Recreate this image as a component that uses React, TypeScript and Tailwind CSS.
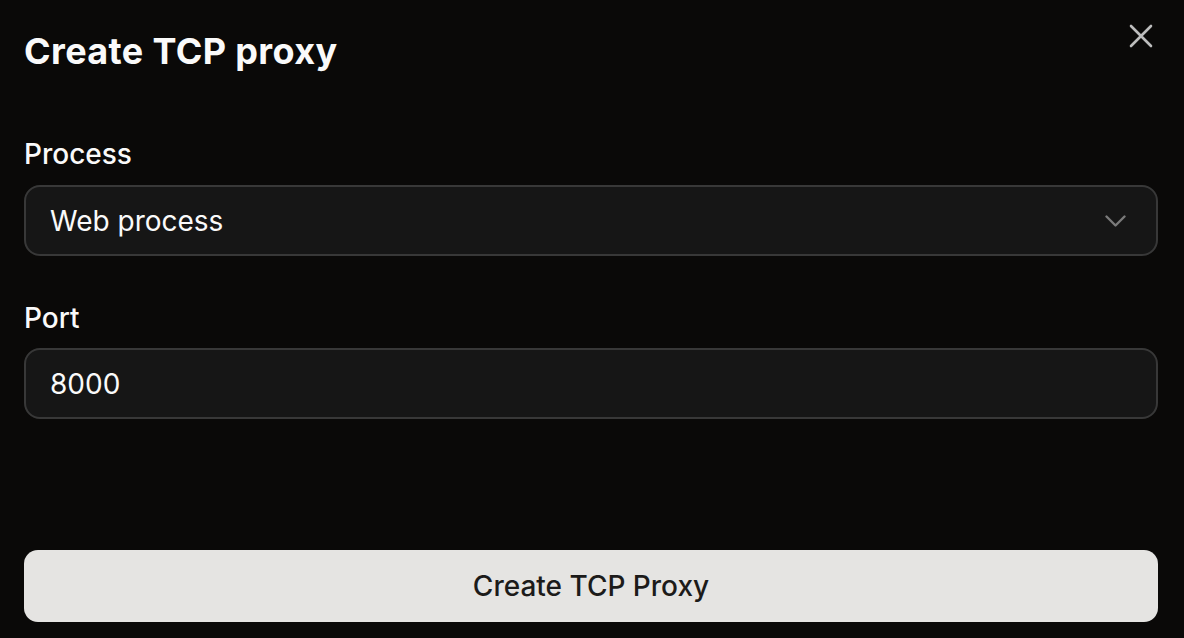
const font = { fontFamily: "Inter, 'Noto Sans', sans-serif" };

function CloseIcon() {
  return (
    <svg width="24" height="24" viewBox="0 0 24 24" fill="none">
      <path d="M2 2 L22 22 M22 2 L2 22" stroke="#bdbdbd" strokeWidth="2.6" strokeLinecap="round" />
    </svg>
  );
}

function Chevron() {
  return (
    <svg width="21" height="12" viewBox="0 0 21 12" fill="none">
      <path d="M1.5 1.5 L10.5 10.5 L19.5 1.5" stroke="#7a7a7a" strokeWidth="2.4" strokeLinecap="round" strokeLinejoin="round" />
    </svg>
  );
}

export default function App() {
  return (
    <div className="flex h-[638px] w-full flex-col bg-[#0a0908] pl-6 pr-[26px] text-[#fafafa]" style={font}>
      <div className="mt-[29px] flex items-start justify-between">
        <h1 className="text-[36px] font-bold leading-[44px] tracking-[0.01em]">Create TCP proxy</h1>
        <button className="mr-[1px] mt-[-9px] p-1">
          <CloseIcon />
        </button>
      </div>

      <label className="mt-[63px] text-[28px] font-medium leading-[36px]">Process</label>
      <div className="mt-[13px] flex h-[71px] items-center justify-between rounded-[16px] border-2 border-[#383838] bg-[#161616] pl-6 pr-[30px]">
        <span className="text-[28px] leading-[36px]">Web process</span>
        <Chevron />
      </div>

      <label className="mt-[44px] text-[28px] font-medium leading-[36px]">Port</label>
      <div className="mt-[12px] flex h-[71px] items-center rounded-[16px] border-2 border-[#383838] bg-[#161616] pl-6">
        <span className="text-[28px] leading-[36px]">8000</span>
      </div>

      <button className="mt-[131px] flex h-[72px] w-full items-center justify-center rounded-[14px] bg-[#e5e4e2] text-[28px] font-medium text-[#1c1b1a]">
        Create TCP Proxy
      </button>
    </div>
  );
}
